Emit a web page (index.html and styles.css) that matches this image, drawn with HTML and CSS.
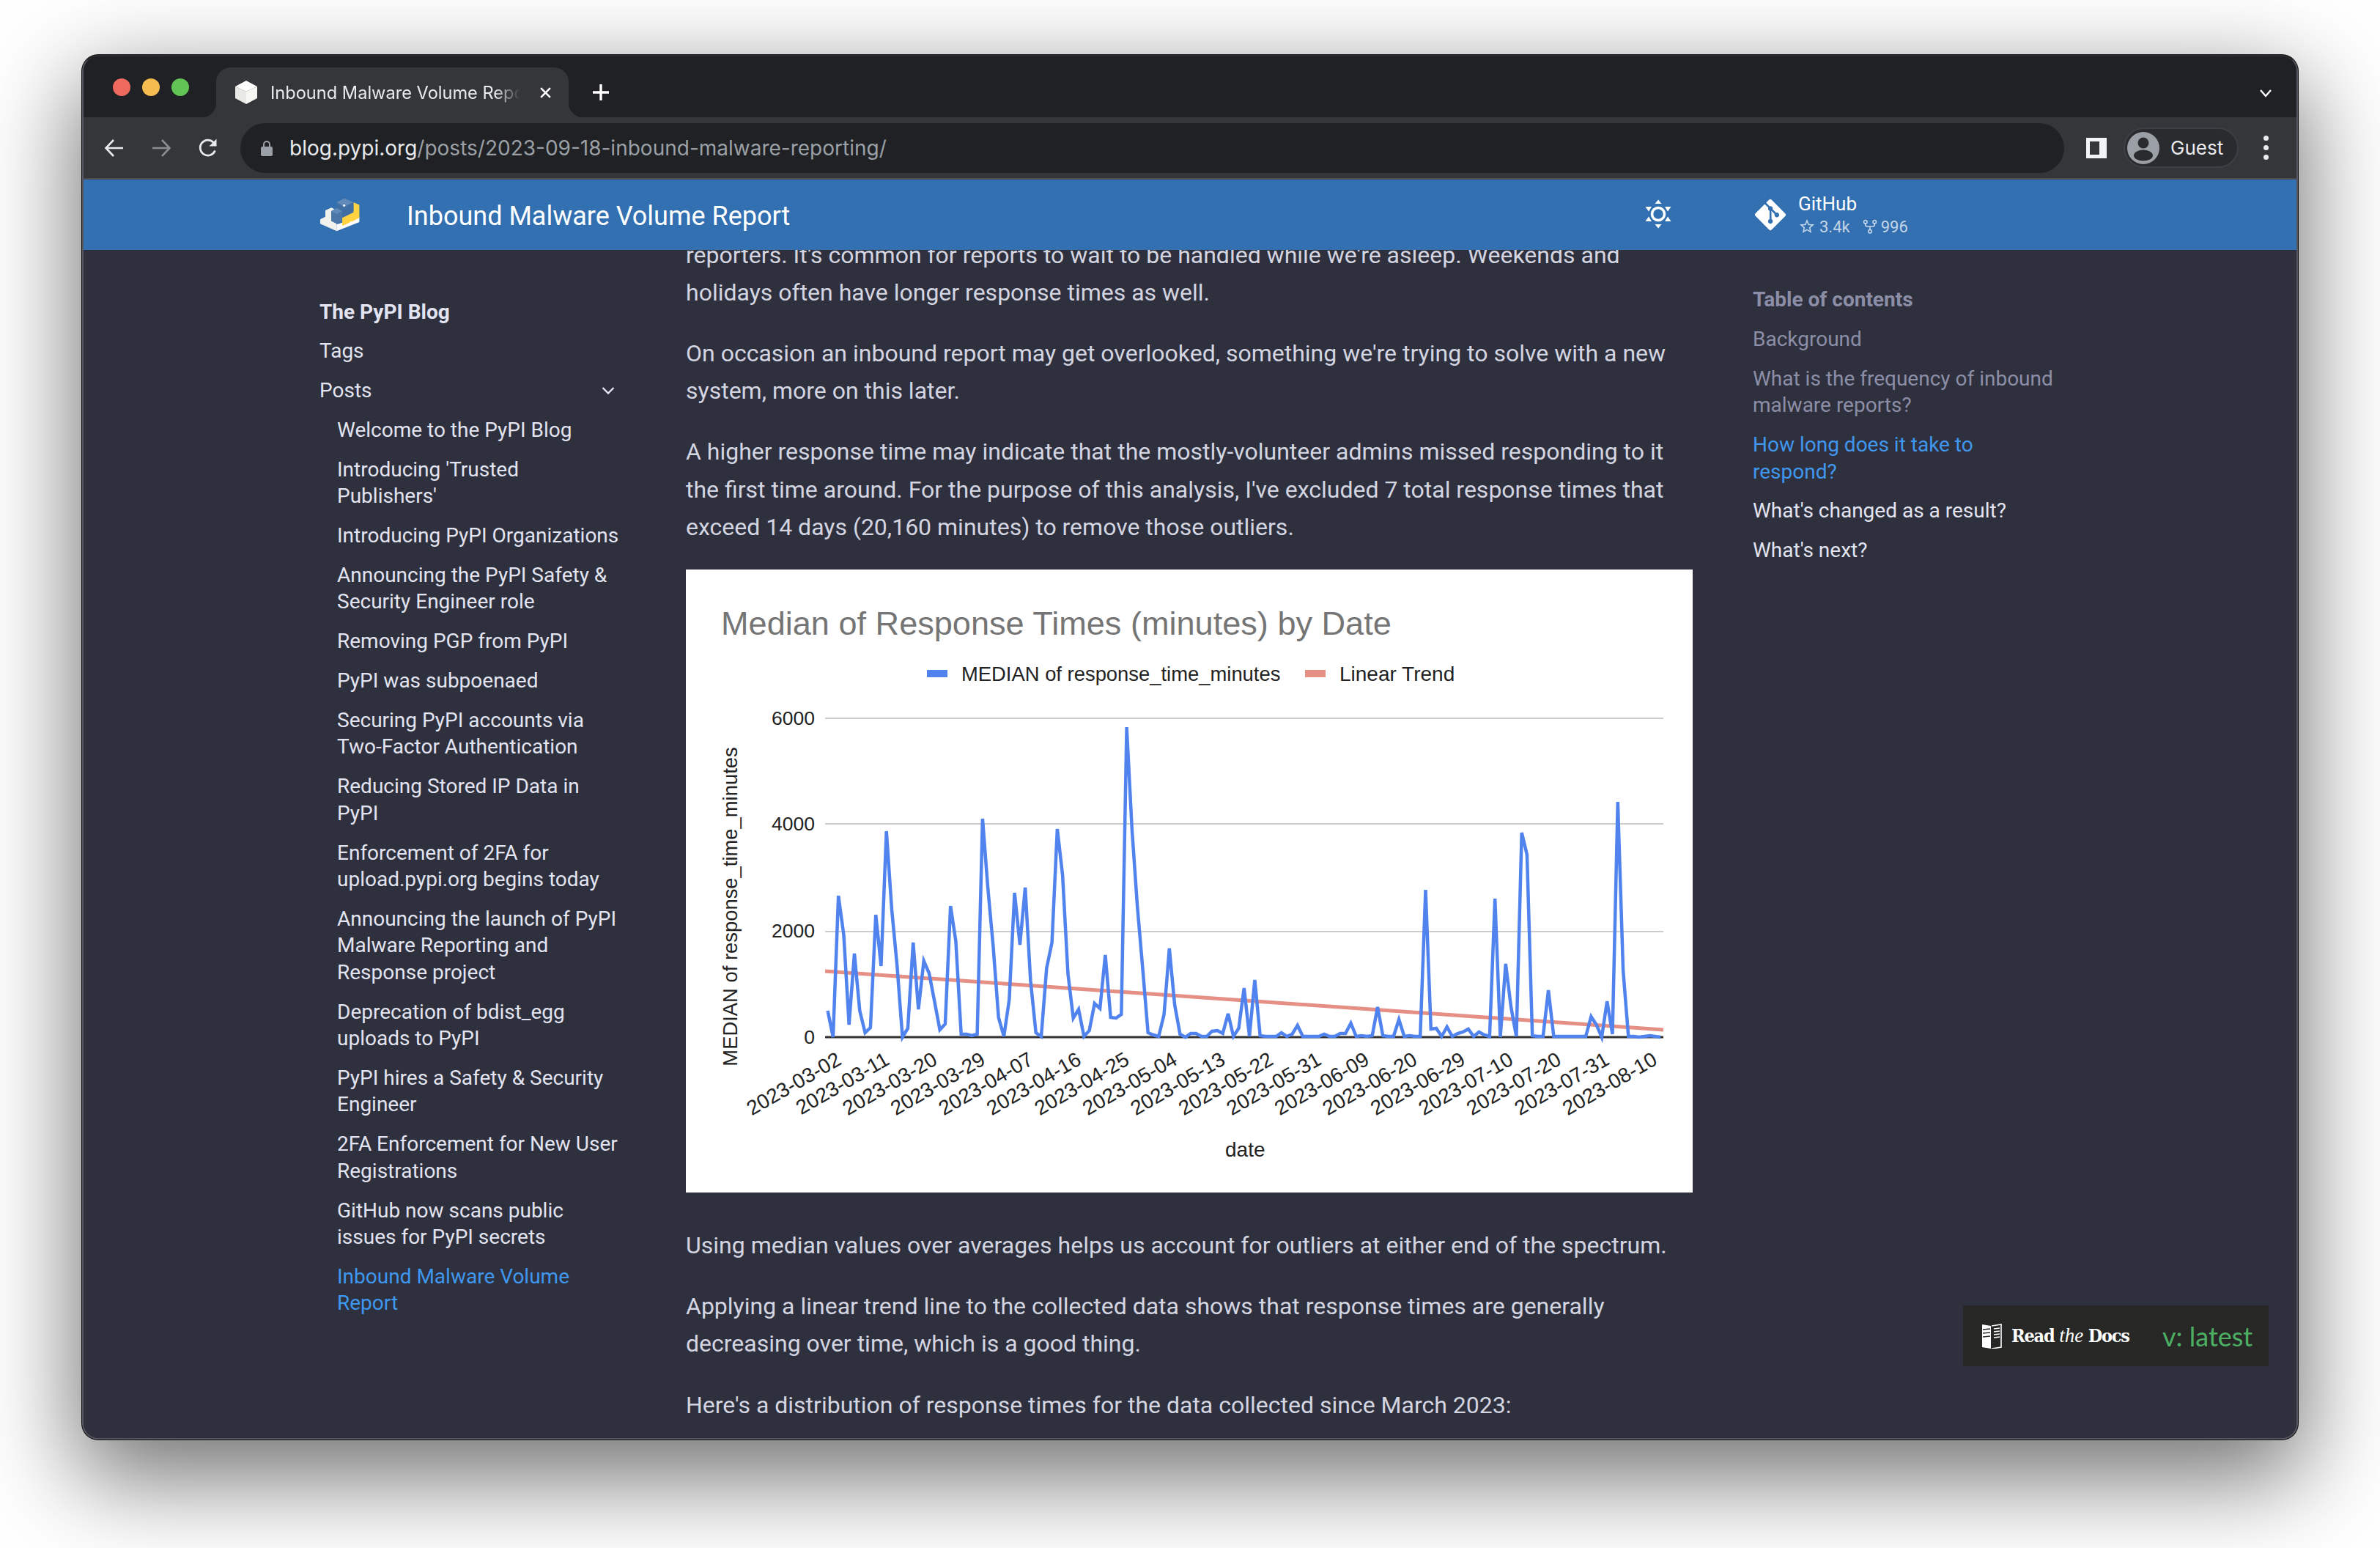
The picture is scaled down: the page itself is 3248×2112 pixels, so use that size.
FILE: index.html
```html
<!DOCTYPE html>
<html lang="en">
<head>
  <meta charset="UTF-8">
  <title>Inbound Malware Volume Report</title>
  <link rel="stylesheet" href="styles.css">
</head>
<body>

  <div class="window">

    <div class="tabstrip">
      <div class="lights">
        <span class="light red"></span>
        <span class="light yellow"></span>
        <span class="light green"></span>
      </div>
      <div class="tab">
        <svg class="favicon" viewBox="0 0 32 32">
          <polygon points="16,0 31,8 16,15 1,8" fill="#ffffff"/>
          <polygon points="1,8 16,15 16,32 1,24" fill="#e9e9e6"/>
          <polygon points="31,8 16,15 16,32 31,24" fill="#f6f6f3"/>
        </svg>
        <span class="tab-title">Inbound Malware Volume Report</span>
        <svg class="tab-close" viewBox="0 0 16 16">
          <path d="M2 2 14 14M14 2 2 14" stroke="#fff" stroke-width="2.4" fill="none"/>
        </svg>
      </div>
      <svg class="new-tab" viewBox="0 0 24 24">
        <path d="M12 1V23M1 12H23" stroke="#fff" stroke-width="3.4" fill="none"/>
      </svg>
      <svg class="tab-menu" viewBox="0 0 18 12">
        <path d="M2 2 9 10 16 2" stroke="#fff" stroke-width="2.4" fill="none"/>
      </svg>
    </div>

    <div class="toolbar">
      <svg class="tool-icon" viewBox="0 0 28 28">
        <path d="M26 14H3M13 3 2.5 14 13 25" stroke="#e8eaed" stroke-width="2.6" fill="none"/>
      </svg>
      <svg class="tool-icon" viewBox="0 0 28 28">
        <path d="M2 14H25M15 3 25.5 14 15 25" stroke="#8a8c90" stroke-width="2.6" fill="none"/>
      </svg>
      <svg class="tool-icon" viewBox="0 0 28 28">
        <path d="M23.5 17.5A10.5 10.5 0 1 1 21.5 6.5" stroke="#e8eaed" stroke-width="2.8" fill="none"/>
        <polygon points="25.5,1.5 25.5,11.5 15.5,11.5" fill="#e8eaed"/>
      </svg>
      <div class="url-bar">
        <svg class="lock" viewBox="0 0 16 22">
          <path d="M4 10V6a4 4 0 0 1 8 0v4" stroke="#9aa0a6" stroke-width="2" fill="none"/>
          <rect x="0" y="9" width="16" height="13" rx="2" fill="#9aa0a6"/>
        </svg>
        <span class="url-host">blog.pypi.org</span><span class="url-path">/posts/2023-09-18-inbound-malware-reporting/</span>
      </div>
      <svg class="panel-icon" viewBox="0 0 28 28">
        <rect x="0" y="0" width="28" height="28" fill="#f1f3f4"/>
        <rect x="5" y="5" width="13" height="18" fill="#35363a"/>
      </svg>
      <div class="guest">
        <svg class="avatar" viewBox="0 0 44 44">
          <circle cx="22" cy="22" r="22" fill="#9aa0a6"/>
          <circle cx="22" cy="15" r="7.5" fill="#2a2b2f"/>
          <ellipse cx="22" cy="32" rx="13" ry="7.5" fill="#2a2b2f"/>
        </svg>
        <span>Guest</span>
      </div>
      <div class="dots"><span></span><span></span><span></span></div>
    </div>

    <header class="site-header">
      <svg class="logo" viewBox="45 45 175 147">
        <polygon points="48,138 70,127 70,100 96,88 118,100 118,188 48,157" fill="#f1f1ee"/>
        <polygon points="118,160 215,128 215,150 118,188" fill="#ffffff"/>
        <polygon points="190,65 215,76 215,132 190,144 142,166 142,124 190,100" fill="#ffd242"/>
        <polygon points="118,65 152,48 190,65 190,108 142,132 142,103 118,90" fill="#3f6ea2"/>
        <polygon points="95,103 118,90 142,103 142,145 118,157 95,145" fill="#4a76a8"/>
        <polygon points="95,103 118,90 142,103 118,115" fill="#5f8ab9"/>
        <polygon points="118,65 152,48 190,65 150,85" fill="#5f8ab9"/>
        <circle cx="150" cy="79" r="5" fill="#fff"/>
        <circle cx="180" cy="152" r="5" fill="#fff"/>
      </svg>
      <div class="site-title">Inbound Malware Volume Report</div>
      <svg class="sun" viewBox="-20 -20 40 40">
        <circle cx="0" cy="0" r="8.5" stroke="#fff" stroke-width="3.6" fill="none"/>
        <g fill="#fff">
          <polygon points="0,-19.5 -4.5,-14 4.5,-14"/>
          <polygon points="0,19.5 -4.5,14 4.5,14"/>
          <polygon points="-17.5,-10 -9,-10 -13,-3.5"/>
          <polygon points="17.5,-10 9,-10 13,-3.5"/>
          <polygon points="-17.5,10 -9,10 -13,3.5"/>
          <polygon points="17.5,10 9,10 13,3.5"/>
        </g>
      </svg>
      <div class="source">
        <svg class="git-icon" viewBox="0 0 448 512">
          <path fill="#fff" d="M439.55 236.05 244 40.45a28.87 28.87 0 0 0-40.81 0l-40.66 40.63 51.52 51.52c27.06-9.14 52.68 16.77 43.39 43.68l49.66 49.66c34.23-11.8 61.18 31 35.47 56.69-26.49 26.49-70.21-2.87-56-37.34L240.22 199v121.85c25.3 12.54 22.26 41.85 9.08 55a34.34 34.34 0 0 1-48.55 0c-17.57-17.6-11.07-46.91 11.25-56v-123c-20.8-8.51-24.6-30.74-18.64-45L142.57 101 8.45 235.14a28.86 28.86 0 0 0 0 40.81l195.61 195.6a28.86 28.86 0 0 0 40.8 0l194.69-194.69a28.86 28.86 0 0 0 0-40.81z"/>
        </svg>
        <div class="source-text">
          <div class="source-name">GitHub</div>
          <div class="source-facts">
            <svg class="fact-icon" viewBox="0 0 24 24">
              <path d="M12 15.39l-3.76 2.27.99-4.28-3.32-2.88 4.38-.37L12 6.09l1.71 4.04 4.38.37-3.32 2.88.99 4.28M22 9.24l-7.19-.61L12 2 9.19 8.63 2 9.24l5.45 4.73L5.82 21 12 17.27 18.18 21l-1.64-7.03L22 9.24z"/>
            </svg>
            <span class="fact">3.4k</span>
            <svg class="fact-icon fork" viewBox="0 0 16 16">
              <circle cx="3" cy="3" r="1.8"/>
              <circle cx="13" cy="3" r="1.8"/>
              <circle cx="8" cy="13.4" r="1.8"/>
              <path d="M3 4.8V6a2 2 0 0 0 2 2h6a2 2 0 0 0 2-2V4.8M8 8v3.6"/>
            </svg>
            <span class="fact">996</span>
          </div>
        </div>
      </div>
    </header>

    <div class="page">

      <nav class="sidebar">
        <div class="nav-title">The PyPI Blog</div>
        <a class="nav-link">Tags</a>
        <a class="nav-link nav-toggle">Posts
          <svg class="nav-chevron" viewBox="0 0 18 12">
            <path d="M1.5 2 9 9.5 16.5 2" stroke="#e2e4f1" stroke-width="2.4" fill="none"/>
          </svg>
        </a>
        <div class="nav-nested">
          <a class="nav-link">Welcome to the PyPI Blog</a>
          <a class="nav-link">Introducing 'Trusted Publishers'</a>
          <a class="nav-link">Introducing PyPI Organizations</a>
          <a class="nav-link">Announcing the PyPI Safety &amp; Security Engineer role</a>
          <a class="nav-link">Removing PGP from PyPI</a>
          <a class="nav-link">PyPI was subpoenaed</a>
          <a class="nav-link">Securing PyPI accounts via Two-Factor Authentication</a>
          <a class="nav-link">Reducing Stored IP Data in PyPI</a>
          <a class="nav-link">Enforcement of 2FA for upload.pypi.org begins today</a>
          <a class="nav-link">Announcing the launch of PyPI Malware Reporting and Response project</a>
          <a class="nav-link">Deprecation of bdist_egg uploads to PyPI</a>
          <a class="nav-link">PyPI hires a Safety &amp; Security Engineer</a>
          <a class="nav-link">2FA Enforcement for New User Registrations</a>
          <a class="nav-link">GitHub now scans public issues for PyPI secrets</a>
          <a class="nav-link active">Inbound Malware Volume Report</a>
        </div>
      </nav>

      <main class="content">
        <p>reporters. It's common for reports to wait to be handled while we're asleep. Weekends and holidays often have longer response times as well.</p>
        <p>On occasion an inbound report may get overlooked, something we're trying to solve with a new system, more on this later.</p>
        <p>A higher response time may indicate that the mostly-volunteer admins missed responding to it the first time around. For the purpose of this analysis, I've excluded 7 total response times that exceed 14 days (20,160 minutes) to remove those outliers.</p>

        <svg class="chart" viewBox="935 776 1374 850">
          <text class="chart-title" x="983" y="865">Median of Response Times (minutes) by Date</text>

          <rect x="1264" y="913" width="28" height="10" fill="#5183ee"/>
          <text class="chart-label series-label" x="1311" y="928">MEDIAN of response_time_minutes</text>
          <rect x="1780" y="913" width="28" height="10" fill="#e58f85"/>
          <text class="chart-label" x="1827" y="928">Linear Trend</text>

          <line class="grid" x1="1125" y1="979" x2="2269" y2="979"/>
          <line class="grid" x1="1125" y1="1123" x2="2269" y2="1123"/>
          <line class="grid" x1="1125" y1="1270" x2="2269" y2="1270"/>
          <line class="axis" x1="1125" y1="1414" x2="2269" y2="1414"/>

          <text class="chart-label tick" x="1111" y="988">6000</text>
          <text class="chart-label tick" x="1111" y="1132">4000</text>
          <text class="chart-label tick" x="1111" y="1278">2000</text>
          <text class="chart-label tick" x="1111" y="1423">0</text>

          <text class="chart-label series-label axis-title" transform="translate(1005 1236) rotate(-90)">MEDIAN of response_time_minutes</text>
          <text class="chart-label" x="1671" y="1577">date</text>

          <g id="dates"></g>

          <line class="trend" x1="1125" y1="1324" x2="2269" y2="1404"/>
          <polyline id="medianLine" class="median"/>
        </svg>

        <p>Using median values over averages helps us account for outliers at either end of the spectrum.</p>
        <p>Applying a linear trend line to the collected data shows that response times are generally decreasing over time, which is a good thing.</p>
        <p>Here's a distribution of response times for the data collected since March 2023:</p>
      </main>

      <aside class="toc">
        <div class="toc-title">Table of contents</div>
        <a class="toc-link passed">Background</a>
        <a class="toc-link passed">What is the frequency of inbound malware reports?</a>
        <a class="toc-link active">How long does it take to respond?</a>
        <a class="toc-link">What's changed as a result?</a>
        <a class="toc-link">What's next?</a>
      </aside>

    </div>

    <div class="rtd-badge">
      <svg class="rtd-icon" viewBox="0 0 27 34">
        <path d="M0 1 12 3V34L0 32Z" fill="#fff"/>
        <path d="M13 3 26 1V32L13 34" stroke="#fff" stroke-width="1.6" fill="none"/>
        <path d="M1 8 11 7M1 13 11 12M1 18 11 17" stroke="#272725" stroke-width="1.4"/>
        <path d="M16 7 24 6M16 11 24 10M16 15 24 14M16 19 24 18" stroke="#fff" stroke-width="1.4"/>
      </svg>
      <span class="rtd-name">Read <i>the</i> Docs</span>
      <span class="rtd-version">v: latest</span>
    </div>

  </div>

  <script src="chart.js"></script>
</body>
</html>
```

FILE: styles.css
```css
* {
  box-sizing: border-box;
}
body {
  margin: 0;
  width: 3248px;
  height: 2112px;
  overflow: hidden;
  background: #fff;
  padding: 75px 0 0 112px;
  font-family: Roboto, sans-serif;
}
a {
  display: block;
}
svg {
  display: block;
  flex: none;
}

.window {
  position: relative;
  width: 3024px;
  height: 1889px;
  display: flex;
  flex-direction: column;
  border: 2px solid #55565f;
  border-top-color: #2c2d30;
  border-radius: 22px;
  overflow: hidden;
  background: #2f303d;
  box-shadow: 0 0 0 1px #0c0c0e, 0 44px 130px 8px rgba(0,0,0,.56);
}

/* browser chrome */
.tabstrip {
  height: 83px;
  flex: none;
  display: flex;
  background: #202124;
  padding-left: 40px;
}
.lights {
  display: flex;
  gap: 16px;
  margin-top: 30px;
}
.light {
  width: 24px;
  height: 24px;
  border-radius: 50%;
}
.red { background: #ee6a5f; }
.yellow { background: #f5bd4f; }
.green { background: #61c454; }

.tab {
  position: relative;
  width: 481px;
  height: 68px;
  margin: 15px 0 0 37px;
  display: flex;
  align-items: center;
  padding: 0 0 0 25px;
  background: #35363a;
  border-radius: 20px 20px 0 0;
}
.tab::before, .tab::after {
  content: "";
  position: absolute;
  bottom: 0;
  width: 20px;
  height: 20px;
}
.tab::before {
  left: -20px;
  background: radial-gradient(circle at 0 0, #202124 20px, #35363a 20.5px);
}
.tab::after {
  right: -20px;
  background: radial-gradient(circle at 100% 0, #202124 20px, #35363a 20.5px);
}
.favicon {
  width: 32px;
  height: 32px;
}
.tab-title {
  width: 341px;
  margin-left: 17px;
  font-family: Inter, sans-serif;
  font-size: 23.6px;
  color: #e8eaed;
  white-space: nowrap;
  overflow: hidden;
  -webkit-mask-image: linear-gradient(to right, #000 90%, transparent 100%);
  mask-image: linear-gradient(to right, #000 90%, transparent 100%);
}
.tab-close {
  width: 17px;
  height: 17px;
  margin-left: 26px;
}
.new-tab {
  width: 24px;
  height: 24px;
  margin: 37px 0 0 32px;
}
.tab-menu {
  width: 18px;
  height: 12px;
  margin: 44px 33px 0 auto;
}

.toolbar {
  height: 85px;
  flex: none;
  display: flex;
  align-items: center;
  padding: 0 38px 0 28px;
  background: #35363a;
  border-bottom: 2px solid #4b4c50;
}
.tool-icon {
  width: 28px;
  height: 28px;
  margin-right: 36px;
}
.tool-icon:nth-child(3) {
  margin-right: 30px;
}
.url-bar {
  flex: 1;
  height: 68px;
  display: flex;
  align-items: center;
  padding-left: 28px;
  background: #202124;
  border-radius: 34px;
  font-family: Inter, sans-serif;
  font-size: 28px;
}
.lock {
  width: 16px;
  height: 22px;
  margin-right: 23px;
}
.url-host { color: #e8eaed; }
.url-path { color: #9aa0a6; }
.panel-icon {
  width: 28px;
  height: 28px;
  margin-left: 30px;
}
.guest {
  width: 157px;
  height: 55px;
  margin-left: 23px;
  display: flex;
  align-items: center;
  gap: 15px;
  padding-left: 3px;
  background: #2a2b2f;
  border: 2px solid #3e3f44;
  border-radius: 28px;
  font-family: Inter, sans-serif;
  font-size: 26px;
  color: #e8eaed;
}
.avatar {
  width: 44px;
  height: 44px;
}
.dots {
  display: flex;
  flex-direction: column;
  gap: 6px;
  margin-left: 34px;
}
.dots span {
  width: 7px;
  height: 7px;
  border-radius: 50%;
  background: #e8eaed;
}

/* site header */
.site-header {
  position: relative;
  z-index: 1;
  height: 96px;
  flex: none;
  display: flex;
  align-items: center;
  padding-left: 322px;
  background: #3270b1;
  color: #fff;
}
.logo {
  width: 56px;
  height: 48px;
}
.site-title {
  flex: 1;
  margin-left: 63px;
  padding-top: 3px;
  font-size: 36px;
}
.sun {
  width: 40px;
  height: 40px;
  margin-top: -2px;
}
.source {
  width: 739px;
  margin-left: 112px;
  display: flex;
  align-items: center;
  gap: 17px;
}
.git-icon {
  width: 42px;
  height: 48px;
}
.source-name {
  font-size: 26px;
  line-height: 32px;
}
.source-facts {
  display: flex;
  align-items: center;
  height: 30px;
  font-size: 22px;
  color: rgba(255,255,255,.72);
}
.fact-icon {
  width: 24px;
  height: 24px;
  fill: rgba(255,255,255,.72);
}
.fact {
  margin-left: 5px;
}
.fork {
  width: 20px;
  height: 24px;
  margin-left: 17px;
  fill: none;
  stroke: rgba(255,255,255,.72);
  stroke-width: 1.3;
}

/* page columns */
.page {
  flex: 1;
  min-height: 0;
  display: flex;
  padding-left: 322px;
  overflow: hidden;
}
.sidebar {
  width: 500px;
  flex: none;
  padding-top: 67px;
  font-size: 28px;
  line-height: 36.4px;
  color: #e2e4f1;
}
.nav-title {
  font-weight: 700;
}
.nav-link {
  width: 410px;
  margin-top: 17px;
}
.nav-toggle {
  display: flex;
  justify-content: space-between;
  align-items: center;
  padding-right: 7px;
}
.nav-chevron {
  width: 18px;
  height: 12px;
}
.nav-nested {
  padding-left: 24px;
}
.nav-nested .nav-link {
  width: 386px;
  margin-top: 17.5px;
}
.nav-link.active, .toc-link.active {
  color: #3f97ef;
}

.content {
  width: 1374px;
  flex: none;
  margin-top: -18.5px;
  font-size: 32px;
  line-height: 51.2px;
  color: #d3d5e1;
}
.content p {
  margin: 0 0 32px;
}
.chart {
  width: 1374px;
  height: 850px;
  margin-bottom: 47px;
  background: #fff;
}
.chart text {
  font-family: "Liberation Sans", Arial, sans-serif;
}
.chart-title {
  font-size: 45.1px;
  fill: #757575;
}
.chart-label {
  font-size: 28px;
  fill: #222;
}
.series-label {
  font-size: 27.4px;
}
.tick {
  font-size: 26.5px;
  text-anchor: end;
}
.axis-title {
  text-anchor: middle;
}
.date-label {
  font-size: 28px;
  fill: #222;
  text-anchor: end;
}
.grid {
  stroke: #cccccc;
  stroke-width: 2;
}
.axis {
  stroke: #333;
  stroke-width: 3;
}
.trend {
  stroke: #e58f85;
  stroke-width: 5;
}
.median {
  fill: none;
  stroke: #5183ee;
  stroke-width: 4.5;
}

.toc {
  width: 420px;
  flex: none;
  margin-left: 82px;
  padding-top: 50px;
  font-size: 28px;
  line-height: 36.4px;
  color: #e2e4f1;
}
.toc-title {
  font-weight: 700;
  color: #8c8ea7;
}
.toc-link {
  margin-top: 17.5px;
}
.toc-link.passed {
  color: #8c8ea7;
}

/* read the docs flyout */
.rtd-badge {
  position: absolute;
  left: 2565px;
  top: 1704px;
  width: 417px;
  height: 83px;
  display: flex;
  align-items: center;
  padding-left: 26px;
  background: #272725;
}
.rtd-icon {
  width: 27px;
  height: 34px;
}
.rtd-name {
  width: 206px;
  margin-left: 13px;
  font-family: "DejaVu Serif Condensed", "DejaVu Serif", serif;
  font-weight: 700;
  font-size: 25px;
  letter-spacing: -1.2px;
  color: #fff;
}
.rtd-name i {
  font-weight: 400;
  font-family: "Liberation Serif", serif;
  font-size: 27px;
  letter-spacing: 0;
}
.rtd-version {
  font-family: Lato, sans-serif;
  font-size: 36px;
  color: #4caf63;
}
```

FILE: chart.js
```js
// y position of each median value, one per sampled date
const medianY = [
  1378, 1414, 1221, 1275, 1397, 1300, 1378, 1408, 1401, 1247,
  1317, 1133, 1240, 1317, 1414, 1402, 1285, 1376, 1310, 1327,
  1365, 1404, 1396, 1235, 1283, 1410, 1410, 1412, 1410, 1116,
  1210, 1290, 1387, 1413, 1363, 1217, 1288, 1210, 1337, 1408,
  1413, 1320, 1285, 1130, 1193, 1327, 1388, 1376, 1413, 1405,
  1368, 1375, 1302, 1387, 1388, 1383, 991, 1130, 1235, 1320,
  1408, 1411, 1413, 1383, 1293, 1370, 1410, 1414, 1409, 1409,
  1413, 1413, 1406, 1405, 1409, 1382, 1413, 1402, 1347, 1413,
  1336, 1412, 1413, 1413, 1413, 1408, 1413, 1410, 1398, 1413,
  1413, 1413, 1413, 1410, 1413, 1413, 1409, 1409, 1395, 1413,
  1412, 1413, 1412, 1373, 1412, 1413, 1413, 1390, 1413, 1412,
  1413, 1413, 1213, 1403, 1402, 1413, 1400, 1413, 1409, 1407,
  1403, 1413, 1407, 1411, 1413, 1225, 1414, 1314, 1373, 1413,
  1135, 1165, 1412, 1413, 1413, 1350, 1413, 1413, 1413, 1413,
  1413, 1413, 1413, 1386, 1397, 1414, 1365, 1410, 1093, 1323,
  1413, 1413, 1414, 1413, 1412, 1413, 1414
];

const dates = [
  '2023-03-02', '2023-03-11', '2023-03-20', '2023-03-29', '2023-04-07', '2023-04-16',
  '2023-04-25', '2023-05-04', '2023-05-13', '2023-05-22', '2023-05-31', '2023-06-09',
  '2023-06-20', '2023-06-29', '2023-07-10', '2023-07-20', '2023-07-31', '2023-08-10'
];

const points = medianY.map((y, i) => (1128.6 + i * 7.285).toFixed(1) + ',' + y);
document.getElementById('medianLine').setAttribute('points', points.join(' '));

const group = document.getElementById('dates');
dates.forEach((date, i) => {
  const label = document.createElementNS('http://www.w3.org/2000/svg', 'text');
  const x = 1149 + i * 65.5;
  label.setAttribute('class', 'date-label');
  label.setAttribute('transform', `translate(${x} 1450) rotate(-30)`);
  label.textContent = date;
  group.appendChild(label);
});
```
